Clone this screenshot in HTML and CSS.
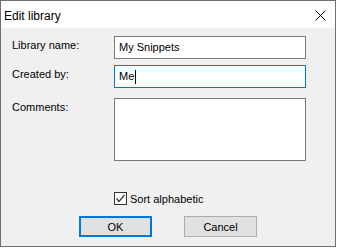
FILE: index.html
```html
<!DOCTYPE html>
<html lang="en">
<head>
    <meta charset="UTF-8">
    <meta name="viewport" content="width=device-width, initial-scale=1.0">
    <title>Edit library</title>
    <link rel="stylesheet" href="styles.css">
</head>
<body>
    <div class="dialog">
        <div class="titlebar">
            <span class="title">Edit library</span>
            <span class="close">
                <svg width="11" height="11" viewBox="0 0 11 11">
                    <path d="M0.5 0.5 L10.5 10.5 M10.5 0.5 L0.5 10.5" stroke="#000" stroke-width="1" fill="none"/>
                </svg>
            </span>
        </div>
        <div class="content">
            <div class="row">
                <label>Library name:</label>
                <div class="field">My Snippets</div>
            </div>
            <div class="row">
                <label>Created by:</label>
                <div class="field focused">Me<span class="caret"></span></div>
            </div>
            <div class="row">
                <label>Comments:</label>
                <div class="field memo"></div>
            </div>
            <div class="check-row">
                <span class="checkbox">
                    <svg width="11" height="11" viewBox="0 0 11 11">
                        <path d="M1.5 5.5 L4 8.5 L9.5 2" stroke="#333" stroke-width="1.2" fill="none"/>
                    </svg>
                </span>
                <span>Sort alphabetic</span>
            </div>
            <div class="buttons">
                <button class="btn default">OK</button>
                <button class="btn">Cancel</button>
            </div>
        </div>
    </div>
</body>
</html>
```

FILE: styles.css
```css
body {
    margin: 0;
    padding: 0;
    background-color: #fff;
    font-family: "Liberation Sans", Arial, sans-serif;
    font-size: 11px;
    color: #000;
}
.dialog {
    box-sizing: border-box;
    width: 336px;
    height: 247px;
    border: 1px solid #6f6f6f;
    background-color: #f0f0f0;
    display: flex;
    flex-direction: column;
}
.titlebar {
    height: 27px;
    background-color: #fff;
    display: flex;
    align-items: center;
    justify-content: space-between;
    padding: 0 9px 0 3px;
}
.title {
    font-size: 12px;
    margin-top: 3px;
}
.close {
    display: flex;
    margin-top: 2px;
}
.content {
    padding: 8px 0 0 11px;
    display: flex;
    flex-direction: column;
}
.row {
    display: grid;
    grid-template-columns: 102px 192px;
    margin-bottom: 6px;
}
.row:nth-child(2) {
    margin-bottom: 10px;
}
.row label {
    padding-top: 3px;
}
.field {
    box-sizing: border-box;
    height: 23px;
    border: 1px solid #7a7a7a;
    background-color: #fff;
    padding: 0 4px;
    line-height: 21px;
    display: flex;
    align-items: center;
}
.field.focused {
    border-color: #0078d7;
}
.field.memo {
    height: 63px;
}
.caret {
    display: inline-block;
    width: 1px;
    height: 14px;
    background-color: #000;
    margin-left: 1px;
}
.check-row {
    display: flex;
    align-items: center;
    margin: 25px 0 0 102px;
    gap: 3px;
}
.checkbox {
    box-sizing: border-box;
    width: 13px;
    height: 13px;
    border: 1px solid #333;
    background-color: #fff;
    display: flex;
}
.buttons {
    display: flex;
    justify-content: center;
    gap: 32px;
    margin: 11px 0 0 -11px;
}
.btn {
    box-sizing: border-box;
    width: 73px;
    height: 21px;
    border: 1px solid #adadad;
    background-color: #e1e1e1;
    font-family: "Liberation Sans", Arial, sans-serif;
    font-size: 11px;
    color: #000;
    padding: 0;
}
.btn.default {
    border: 2px solid #0078d7;
}
```
